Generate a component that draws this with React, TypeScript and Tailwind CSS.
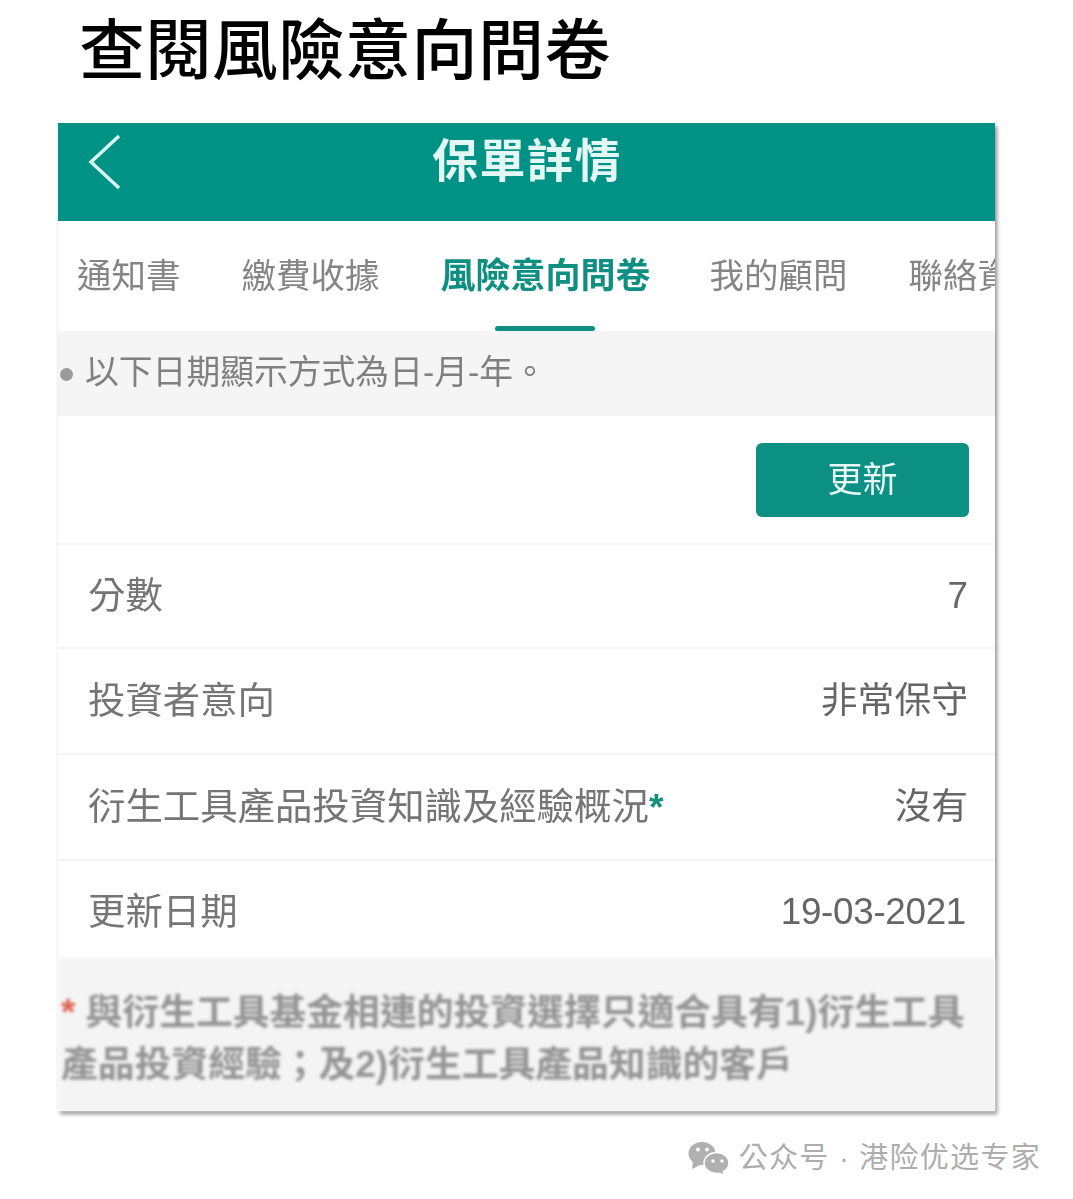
const FONT = "font-['Liberation_Sans','Noto_Sans_CJK_TC',sans-serif]"

const ROWS = [
  { label: '分數', value: '7', box: 'h-[104px]' },
  { label: '投資者意向', value: '非常保守', box: 'h-[106px]' },
  { label: '衍生工具產品投資知識及經驗概況', star: true, value: '沒有', box: 'h-[106px]' },
  { label: '更新日期', value: '19-03-2021', box: 'h-[97px] pt-[5px]', tight: true },
]

const TABS = ['通知書', '繳費收據', '風險意向問卷', '我的顧問', '聯絡資料']

function WeChatIcon() {
  return (
    <svg viewBox="0 0 41 32" className="h-[32px] w-[41px] shrink-0" fill="#b0b0b0">
      <ellipse cx="14" cy="11.500" rx="13.500" ry="11.500" />
      <path d="M5 19 4 27l8-4z" />
      <ellipse cx="28.500" cy="21" rx="12.500" ry="10.500" stroke="#fff" strokeWidth="1.500" />
      <path d="M30 30l5 2-1-5z" />
      <circle cx="10" cy="7.500" r="2" fill="#fff" />
      <circle cx="19" cy="7.500" r="2" fill="#fff" />
      <circle cx="25" cy="19" r="1.700" fill="#fff" />
      <circle cx="34" cy="19" r="1.700" fill="#fff" />
    </svg>
  )
}

export default function App() {
  return (
    <div className={`h-[1199px] w-[1073px] overflow-hidden bg-white ${FONT}`}>
      {/* Heading */}
      <h1 className="h-[123px] pl-[79px] pt-[11px] text-[66px] leading-[80px] font-medium tracking-[0.500px] text-black">
        查閱風險意向問卷
      </h1>

      {/* Phone screenshot */}
      <div className="ml-[58px] w-[937px] bg-white shadow-[2px_3px_4px_rgba(0,0,0,0.45)]">
        <header className="relative flex h-[98px] items-start justify-center bg-[#009285] pt-[10px]">
          <svg viewBox="0 0 34 56" className="absolute top-[11px] left-[29px] h-[56px] w-[34px]" fill="none" stroke="#d9f5f1" strokeWidth="3.500">
            <path d="M32 2 4 28l28 26" />
          </svg>
          <span className="pl-[1px] text-[46px] leading-[56px] font-bold tracking-[1.500px] text-[#e3f7f4] blur-[0.600px]">保單詳情</span>
        </header>

        {/* Tabs */}
        <nav className="relative flex h-[110px] items-start gap-[61px] overflow-hidden pt-[33px] pl-[19px] whitespace-nowrap blur-[0.500px]">
          {TABS.map((tab) => (
            <span
              key={tab}
              className={
                tab === '風險意向問卷'
                  ? 'mr-[-2px] text-[35px] leading-[44px] font-bold text-[#0e8f82]'
                  : 'text-[34.500px] leading-[44px] text-[#858585]'
              }
            >
              {tab}
            </span>
          ))}
          <span className="absolute bottom-0 left-[437px] h-[5px] w-[100px] rounded-full bg-[#0e8f82]" />
        </nav>

        {/* Date notice */}
        <div className="flex h-[85px] items-start gap-[12px] bg-[#f5f5f5] pt-[18px] pl-[2px] text-[33.800px] leading-[46px] text-[#808080] blur-[0.500px]">
          <span className="mt-[19px] h-[13px] w-[13px] shrink-0 rounded-full bg-[#9a9a9a]" />
          <span>以下日期顯示方式為日-月-年。</span>
        </div>

        <div className="flex h-[129px] items-start justify-end border-b-2 border-[#f5f5f5] pt-[27px] pr-[26px]">
          <button className="h-[74px] w-[213px] rounded-[6px] bg-[#0b9083] text-[35px] text-[#e6f7f4] blur-[0.500px]">更新</button>
        </div>

        {/* Detail rows */}
        {ROWS.map((row, i) => (
          <div
            key={row.label}
            className={`flex ${row.box} items-center justify-between pr-[27px] pl-[30px] text-[37.400px] text-[#757575] blur-[0.500px] ${
              i < ROWS.length - 1 ? 'border-b-2 border-[#f3f3f3]' : ''
            }`}
          >
            <span>
              {row.label}
              {row.star && <span className="font-bold text-[#16917f]">*</span>}
            </span>
            <span className={row.tight ? 'mr-[2px] text-[36.800px] tracking-[-0.300px] text-[#666666]' : 'text-[36.800px] text-[#666666]'}>
              {row.value}
            </span>
          </div>
        ))}

        {/* Footnote */}
        <div className="h-[153px] bg-[#f4f4f4] px-[3px] pt-[29px] text-[36.800px] leading-[52px] font-bold text-[#949494] blur-[1.400px]">
          <span className="text-[#e0604f]">* </span>與衍生工具基金相連的投資選擇只適合具有1)衍生工具產品投資經驗；及2)衍生工具產品知識的客戶
        </div>
      </div>

      {/* Watermark */}
      <div className="mt-[27px] flex items-center justify-end gap-[10px] pr-[32px] text-[29px] leading-[40px] tracking-[1.300px] text-[#adadad]">
        <WeChatIcon />
        <span>公众号 · 港险优选专家</span>
      </div>
    </div>
  )
}
